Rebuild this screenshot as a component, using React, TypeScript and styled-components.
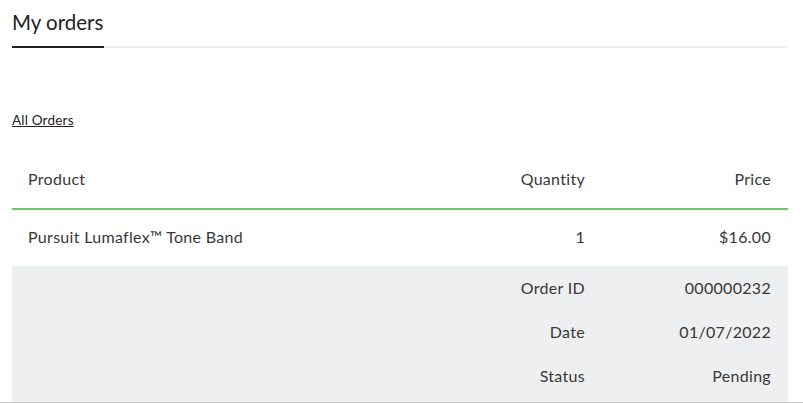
import styled, { createGlobalStyle } from "styled-components"

const GlobalStyle = createGlobalStyle`
  body {
    margin: 0;
    background: #fff;
    font-family: "Lato", "Open Sans", sans-serif;
    color: #333;
  }
  * {
    box-sizing: border-box;
  }
`

const details = [
  { label: "Order ID", value: "000000232" },
  { label: "Date", value: "01/07/2022" },
  { label: "Status", value: "Pending" },
]

const App = () => {
  return (
    <>
      <GlobalStyle />
      <Page>
        <Tabs>
          <Tab>My orders</Tab>
        </Tabs>
        <AllOrders href="#">All Orders</AllOrders>
        <Table>
          <HeadRow>
            <Cell>Product</Cell>
            <Cell $right>Quantity</Cell>
            <Cell $right>Price</Cell>
          </HeadRow>
          <BodyRow>
            <Cell>Pursuit Lumaflex™ Tone Band</Cell>
            <Cell $right>1</Cell>
            <Cell $right>$16.00</Cell>
          </BodyRow>
          <Details>
            {details.map((item) => (
              <DetailRow key={item.label}>
                <Cell />
                <Cell $right>{item.label}</Cell>
                <Cell $right>{item.value}</Cell>
              </DetailRow>
            ))}
          </Details>
        </Table>
      </Page>
      <BottomLine />
    </>
  )
}

const Page = styled.main`
  padding: 0 15px 0 12px;
`

const Tabs = styled.div`
  display: flex;
  border-bottom: 2px solid #eeeeee;
`

const Tab = styled.h1`
  margin: 0 0 -2px;
  padding: 9px 0 10px;
  width: 92px;
  font-size: 20.5px;
  font-weight: 400;
  line-height: 27px;
  white-space: nowrap;
  color: #222;
  border-bottom: 2px solid #1f1f1f;
`

const AllOrders = styled.a`
  display: inline-block;
  margin-top: 63px;
  font-size: 13.5px;
  line-height: 18px;
  letter-spacing: 0.2px;
  color: #222;
  text-decoration: underline;
`

const Table = styled.div`
  margin-top: 21px;
  font-size: 16px;
  letter-spacing: 0.3px;
  color: #383838;
`

const Row = styled.div`
  display: grid;
  grid-template-columns: 1fr 160px 186px;
`

const HeadRow = styled(Row)`
  padding: 20px 0;
  border-bottom: 2px solid #6cc56f;
  line-height: 18px;
`

const BodyRow = styled(Row)`
  padding: 18px 0 20px;
  line-height: 18px;
`

const Details = styled.div`
  background: #eeeff0;
  padding-bottom: 4px;
`

const DetailRow = styled(Row)`
  padding: 13px 0;
  line-height: 18px;
`

const Cell = styled.div<{ $right?: boolean }>`
  padding: 0 17px 0 16px;
  text-align: ${(p) => (p.$right ? "right" : "left")};
  white-space: nowrap;
`

const BottomLine = styled.div`
  height: 1px;
  background: #c8c8c8;
`

export default App
